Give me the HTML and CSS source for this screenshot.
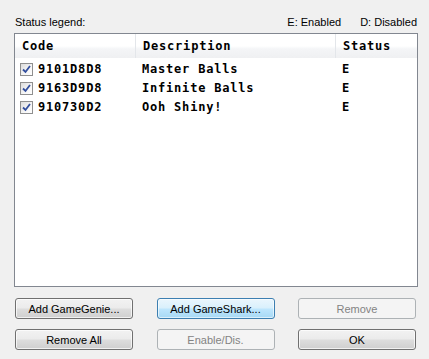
FILE: index.html
```html
<!DOCTYPE html>
<html lang="en">
<head>
  <meta charset="UTF-8">
  <title>Cheats</title>
  <link rel="stylesheet" href="styles.css">
</head>
<body>

<div class="dialog">
  <div class="legend">
    <span>Status legend:</span>
    <span class="legend-keys"><span>E: Enabled</span><span>D: Disabled</span></span>
  </div>

  <div class="cheat-list">
    <div class="list-header">
      <div class="col">Code</div>
      <div class="col">Description</div>
      <div class="col last">Status</div>
    </div>
    <div class="list-row">
      <div class="cell code"><span class="check"></span>9101D8D8</div>
      <div class="cell">Master Balls</div>
      <div class="cell">E</div>
    </div>
    <div class="list-row">
      <div class="cell code"><span class="check"></span>9163D9D8</div>
      <div class="cell">Infinite Balls</div>
      <div class="cell">E</div>
    </div>
    <div class="list-row">
      <div class="cell code"><span class="check"></span>910730D2</div>
      <div class="cell">Ooh Shiny!</div>
      <div class="cell">E</div>
    </div>
  </div>

  <div class="buttons">
    <button class="btn">Add GameGenie...</button>
    <button class="btn default">Add GameShark...</button>
    <button class="btn" disabled>Remove</button>
    <button class="btn">Remove All</button>
    <button class="btn" disabled>Enable/Dis.</button>
    <button class="btn">OK</button>
  </div>
</div>

</body>
</html>
```

FILE: styles.css
```css
body {
  margin: 0;
  padding: 0;
  background-color: #f0f0f0;
  font-family: "Liberation Sans", Arial, sans-serif;
  font-size: 11px;
  color: #000;
}
.dialog {
  width: 404px;
  padding: 15px 11px 0 14px;
}
.legend {
  display: flex;
  justify-content: space-between;
  height: 15px;
  line-height: 15px;
  padding-left: 1px;
  margin-bottom: 3px;
}
.legend-keys {
  display: flex;
  gap: 19px;
  padding-right: 1px;
}
.cheat-list {
  height: 252px;
  background-color: #fff;
  border: 1px solid #828790;
  font-family: "DejaVu Sans Mono", monospace;
  font-weight: bold;
  font-size: 12px;
  letter-spacing: 0.8px;
}
.list-header,
.list-row {
  display: grid;
  grid-template-columns: 121px 200px 1fr;
}
.list-header {
  height: 24px;
  margin-bottom: 2px;
  background: linear-gradient(#ffffff 0%, #ffffff 50%, #f4f5f7 62%, #eff0f2 100%);
}
.list-header .col {
  line-height: 24px;
  padding-left: 7px;
  border-right: 1px solid #e3e6ea;
}
.list-header .col.last {
  border-right: none;
}
.list-row {
  height: 19px;
  line-height: 19px;
}
.cell {
  padding-left: 6px;
}
.cell.code {
  display: flex;
  align-items: center;
  padding-left: 5px;
}
.check {
  width: 13px;
  height: 13px;
  margin-right: 5px;
  box-sizing: border-box;
  border: 1px solid #8f8f8f;
  background:
    url("data:image/svg+xml,%3Csvg xmlns='http://www.w3.org/2000/svg' width='11' height='11'%3E%3Cpath d='M2 5.5 L4.5 8 L9 2' fill='none' stroke='%23334f9e' stroke-width='1.8'/%3E%3C/svg%3E") center / 11px 11px no-repeat,
    linear-gradient(135deg, #dcdcdc, #f6f6f6 60%, #ffffff);
}
.buttons {
  display: grid;
  grid-template-columns: repeat(3, 118px);
  justify-content: space-between;
  row-gap: 10px;
  width: 401px;
  margin: 11px 0 0 1px;
}
.btn {
  height: 21px;
  padding: 0;
  font-family: "Liberation Sans", Arial, sans-serif;
  font-size: 11px;
  color: #000;
  border: 1px solid #707070;
  border-radius: 3px;
  background: linear-gradient(#f2f2f2 0%, #ebebeb 48%, #dddddd 52%, #cfcfcf 100%);
  box-shadow: inset 0 0 0 1px rgba(255,255,255,0.7);
}
.btn.default {
  border-color: #3c7fb1;
  background: linear-gradient(#eaf6fd 0%, #d9f0fc 48%, #bee6fd 52%, #a7d9f5 100%);
  box-shadow: inset 0 0 0 1px rgba(255,255,255,0.6);
}
.btn:disabled {
  color: #838383;
  border-color: #adb2b5;
  background: #f4f4f4;
  box-shadow: none;
}
```
